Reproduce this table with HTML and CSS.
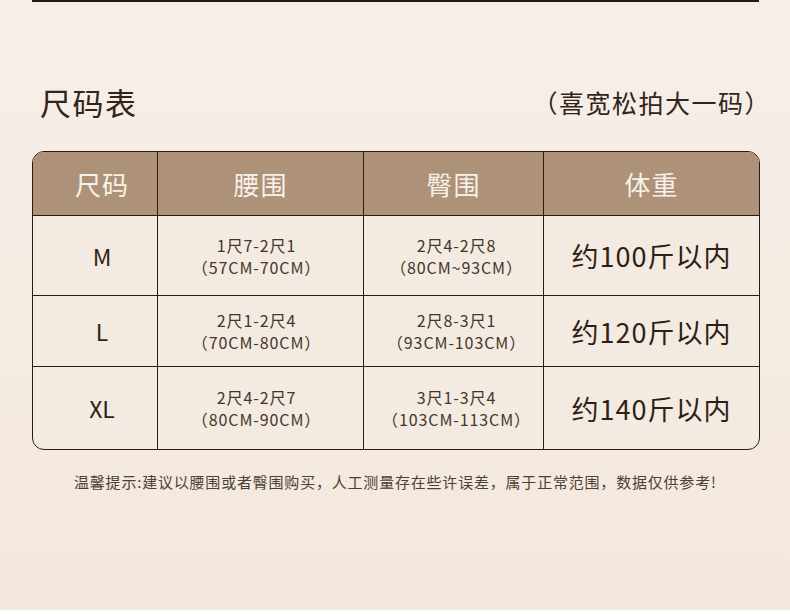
FILE: index.html
```html
<!DOCTYPE html>
<html lang="zh">
<head>
<meta charset="utf-8">
<link rel="stylesheet" href="styles.css">
</head>
<body>
<div class="page">
  <div class="topline"></div>
  <div class="title-row">
    <h1 class="title">尺码表</h1>
    <div class="subtitle">（喜宽松拍大一码）</div>
  </div>
  <div class="size-table">
    <div class="cell head first">尺码</div>
    <div class="cell head">腰围</div>
    <div class="cell head">臀围</div>
    <div class="cell head last">体重</div>

    <div class="cell size first">M</div>
    <div class="cell measure waist"><span>1尺7-2尺1</span><span>（57CM-70CM）</span></div>
    <div class="cell measure hip"><span>2尺4-2尺8</span><span>（80CM~93CM）</span></div>
    <div class="cell weight last">约100斤以内</div>

    <div class="cell size first">L</div>
    <div class="cell measure waist"><span>2尺1-2尺4</span><span>（70CM-80CM）</span></div>
    <div class="cell measure hip"><span>2尺8-3尺1</span><span>（93CM-103CM）</span></div>
    <div class="cell weight last">约120斤以内</div>

    <div class="cell size first bottom">XL</div>
    <div class="cell measure waist bottom"><span>2尺4-2尺7</span><span>（80CM-90CM）</span></div>
    <div class="cell measure hip bottom"><span>3尺1-3尺4</span><span>（103CM-113CM）</span></div>
    <div class="cell weight last bottom">约140斤以内</div>
  </div>
  <p class="note">温馨提示:建议以腰围或者臀围购买，人工测量存在些许误差，属于正常范围，数据仅供参考!</p>
</div>
<div class="white-strip"></div>
</body>
</html>
```
FILE: styles.css
```css
html, body {
  margin: 0;
  padding: 0;
  background: #ffffff;
}

.page {
  width: 790px;
  height: 610px;
  overflow: hidden;
  background: linear-gradient(180deg, #f6efe8 0%, #f4ebe2 60%, #f4e8dd 100%);
  font-family: "Noto Sans CJK SC", "Noto Sans", sans-serif;
  color: #3a2a1c;
  display: flex;
  flex-direction: column;
}

.white-strip {
  height: 4px;
  background: #ffffff;
}

.topline {
  height: 2px;
  margin: 0 31px 0 32px;
  background: #2a1a0c;
}

.title-row {
  display: flex;
  justify-content: space-between;
  align-items: center;
  margin-top: 78px;
  padding: 0 19px 0 40px;
  height: 44px;
}

.title {
  margin: 0;
  font-size: 31px;
  font-weight: 400;
  line-height: 44px;
  color: #33241a;
  letter-spacing: 1.5px;
}

.subtitle {
  font-size: 25px;
  line-height: 44px;
  color: #33241a;
  letter-spacing: 1.5px;
}

.size-table {
  margin: 27px 30px 0 32px;
  display: grid;
  grid-template-columns: 125px 206px 180px 1fr;
  grid-template-rows: 64px 80px 71px 82px;
  border: 1px solid #2b1a0e;
  border-radius: 12px;
  overflow: hidden;
  background: #f3eae1;
}

.cell {
  border-right: 1px solid #2b1a0e;
  border-bottom: 1px solid #2b1a0e;
  display: flex;
  flex-direction: column;
  align-items: center;
  justify-content: center;
  text-align: center;
}

.cell.first {
  padding-left: 14px;
}

.cell.last {
  border-right: none;
}

.cell.bottom {
  border-bottom: none;
}

.head {
  background: #ad9179;
  color: #f8f1e9;
  font-size: 26px;
  font-weight: 400;
  letter-spacing: 1px;
}

.size {
  font-size: 23px;
  color: #2e1f14;
}

.measure {
  font-size: 16px;
  line-height: 22px;
  color: #45362a;
  letter-spacing: 0.9px;
}

.measure.waist {
  padding-right: 8px;
}

.measure.hip {
  padding-left: 6px;
}

.weight {
  font-size: 27px;
  color: #2e1f14;
  letter-spacing: 1px;
}

.note {
  margin: 21px 0 0 0;
  padding-left: 74px;
  font-size: 15px;
  letter-spacing: 0.8px;
  color: #4e3f34;
  line-height: 22px;
}
```
